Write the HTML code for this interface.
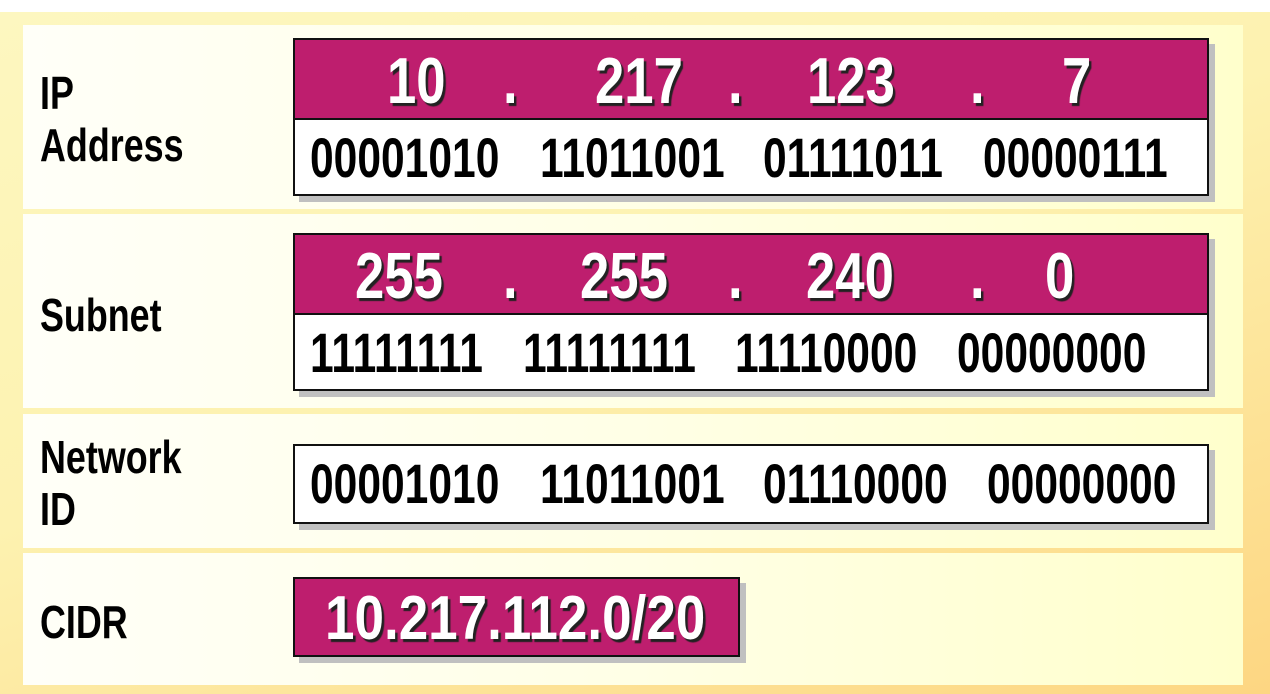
<!DOCTYPE html>
<html><head><meta charset="utf-8"><style>
*{margin:0;padding:0;box-sizing:border-box}
html,body{width:1270px;height:694px;overflow:hidden}
body{position:relative;background:#fff;font-family:"Liberation Sans",Arial,sans-serif}
.bg{position:absolute;left:0;top:12px;width:1270px;height:682px;background:linear-gradient(160deg,#fdf7c0 0%,#fdf2b0 45%,#fdd682 100%)}
.p{position:absolute;left:23px;width:1220px;background:linear-gradient(90deg,#fffff8 0%,#ffffe6 50%,#ffffcc 100%)}
.box{position:absolute;border:2px solid #111;background:#fff;box-shadow:6px 6px 0 #c0c0c0}
.mag{position:absolute;left:0;right:0;top:0;background:#be1e6e;border-bottom:2px solid #111}
.t{position:absolute;white-space:pre;font-weight:bold;line-height:1;transform-origin:left top}
.lab{font-size:46px;color:#000;transform:scaleX(.78)}
.num{font-size:65px;color:#fff;text-shadow:3px 3px 1px #222;transform:scaleX(.81)}
.bin{font-size:56px;color:#000;transform:scaleX(.76)}
</style></head><body>
<div class="bg"></div>
<div class="p" style="top:25px;height:184px"></div>
<div class="p" style="top:214px;height:194px"></div>
<div class="p" style="top:414px;height:134px"></div>
<div class="p" style="top:553px;height:132px"></div>

<div class="box" style="left:293px;top:38px;width:916px;height:158px"><div class="mag" style="height:80px"></div></div>
<div class="box" style="left:293px;top:233px;width:916px;height:158px"><div class="mag" style="height:80px"></div></div>
<div class="box" style="left:293px;top:444px;width:916px;height:80px"></div>
<div class="box" style="left:293px;top:577px;width:447px;height:80px;background:#be1e6e"></div>

<div class="t lab" style="left:40px;top:70px">IP</div>
<div class="t lab" style="left:40px;top:122px">Address</div>
<div class="t lab" style="left:40px;top:292px">Subnet</div>
<div class="t lab" style="left:40px;top:434px">Network</div>
<div class="t lab" style="left:40px;top:486px">ID</div>
<div class="t lab" style="left:40px;top:599px">CIDR</div>

<div class="t num" style="left:387px;top:48px">10</div>
<div class="t num" style="left:503px;top:48px">.</div>
<div class="t num" style="left:595px;top:48px">217</div>
<div class="t num" style="left:728px;top:48px">.</div>
<div class="t num" style="left:807px;top:48px">123</div>
<div class="t num" style="left:970px;top:48px">.</div>
<div class="t num" style="left:1062px;top:48px">7</div>

<div class="t bin" style="left:310px;top:130px">00001010</div>
<div class="t bin" style="left:540px;top:130px">11011001</div>
<div class="t bin" style="left:763px;top:130px">01111011</div>
<div class="t bin" style="left:983px;top:130px">00000111</div>

<div class="t num" style="left:355px;top:243px">255</div>
<div class="t num" style="left:503px;top:243px">.</div>
<div class="t num" style="left:580px;top:243px">255</div>
<div class="t num" style="left:728px;top:243px">.</div>
<div class="t num" style="left:806px;top:243px">240</div>
<div class="t num" style="left:970px;top:243px">.</div>
<div class="t num" style="left:1045px;top:243px">0</div>

<div class="t bin" style="left:310px;top:325px">11111111</div>
<div class="t bin" style="left:523px;top:325px">11111111</div>
<div class="t bin" style="left:735px;top:325px">11110000</div>
<div class="t bin" style="left:957px;top:325px">00000000</div>

<div class="t bin" style="left:310px;top:456px">00001010</div>
<div class="t bin" style="left:540px;top:456px">11011001</div>
<div class="t bin" style="left:763px;top:456px">01110000</div>
<div class="t bin" style="left:987px;top:456px">00000000</div>

<div class="t num" style="left:325px;top:588px;font-size:62px;transform:scaleX(.855)">10.217.112.0/20</div>
</body></html>
